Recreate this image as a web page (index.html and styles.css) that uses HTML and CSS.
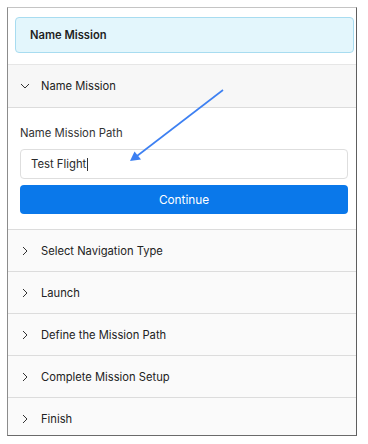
FILE: index.html
```html
<!DOCTYPE html>
<html>
<head>
<meta charset="utf-8">
<link rel="stylesheet" href="styles.css">
</head>
<body>
<div class="frame">
  <div class="top">
    <div class="title-box">Name Mission</div>
  </div>
  <div class="row open">
    <svg class="chev" width="10" height="10" viewBox="0 0 10 10"><path d="M1 3 L5 7 L9 3" fill="none" stroke="#333" stroke-width="1"/></svg>
    <span>Name Mission</span>
  </div>
  <div class="panel">
    <div class="label">Name Mission Path</div>
    <div class="input"><span>Test Flight</span><span class="caret"></span></div>
    <div class="btn">Continue</div>
  </div>
  <div class="row"><svg class="chev" width="10" height="10" viewBox="0 0 10 10"><path d="M3 1 L7 5 L3 9" fill="none" stroke="#333" stroke-width="1"/></svg><span>Select Navigation Type</span></div>
  <div class="row"><svg class="chev" width="10" height="10" viewBox="0 0 10 10"><path d="M3 1 L7 5 L3 9" fill="none" stroke="#333" stroke-width="1"/></svg><span>Launch</span></div>
  <div class="row"><svg class="chev" width="10" height="10" viewBox="0 0 10 10"><path d="M3 1 L7 5 L3 9" fill="none" stroke="#333" stroke-width="1"/></svg><span>Define the Mission Path</span></div>
  <div class="row"><svg class="chev" width="10" height="10" viewBox="0 0 10 10"><path d="M3 1 L7 5 L3 9" fill="none" stroke="#333" stroke-width="1"/></svg><span>Complete Mission Setup</span></div>
  <div class="row last"><svg class="chev" width="10" height="10" viewBox="0 0 10 10"><path d="M3 1 L7 5 L3 9" fill="none" stroke="#333" stroke-width="1"/></svg><span>Finish</span></div>
</div>
<svg class="arrow" width="368" height="444" viewBox="0 0 368 444">
  <line x1="223" y1="90" x2="137" y2="156" stroke="#3d80f2" stroke-width="1.6"/>
  <polygon points="130,161 134.5,151.5 141,159.5" fill="#3d80f2"/>
</svg>
</body>
</html>
```
FILE: styles.css
```css
html, body {
  margin: 0;
  padding: 0;
  background: #fff;
}
body {
  font-family: Inter, "Noto Sans", sans-serif;
  color: #222;
  position: relative;
  width: 368px;
  height: 444px;
}
.frame {
  margin: 7px 0 0 7px;
  width: 348px;
  height: 427px;
  border: 1px solid #8c8c8c;
  border-top-color: #c4c4c4;
  border-right-color: #5e5e5e;
  border-bottom-color: #6a6a6a;
  background: #fafafa;
  overflow: hidden;
}
.top {
  background: #fff;
  padding: 9px 2px 10px 7px;
  border-bottom: 1px solid #e6e6e6;
  height: 37px;
}
.title-box {
  height: 34px;
  border: 1px solid #a8dcf0;
  border-radius: 4px;
  background: #e3f6fc;
  display: flex;
  align-items: center;
  padding-left: 14px;
  font-size: 11.2px;
  font-weight: 600;
  color: #1e1e1e;
}
.row {
  height: 41px;
  display: flex;
  align-items: center;
  background: #fafafa;
  border-bottom: 1px solid #dcdcdc;
  font-size: 11.2px;
  color: #222;
}
.row.last {
  border-bottom: none;
}
.row.open {
  height: 42px;
  background: #f7f7f7;
}
.chev {
  margin-left: 12px;
  margin-right: 11px;
  flex: none;
}
.panel {
  background: #fff;
  padding: 18px 8px 15px 12px;
  border-bottom: 1px solid #dcdcdc;
}
.label {
  font-size: 11.3px;
  color: #333;
  line-height: 14px;
  margin-bottom: 9px;
}
.input {
  height: 28px;
  border: 1px solid #dedede;
  border-radius: 4px;
  display: flex;
  align-items: center;
  padding-left: 10px;
  font-size: 11.3px;
  color: #2a2a2a;
}
.caret {
  display: inline-block;
  width: 1px;
  height: 13px;
  background: #333;
  margin-left: 1px;
}
.btn {
  margin-top: 6px;
  height: 29px;
  border-radius: 4px;
  background: #0a78ea;
  color: #fff;
  display: flex;
  align-items: center;
  justify-content: center;
  font-size: 11.8px;
}
.arrow {
  position: absolute;
  left: 0;
  top: 0;
  pointer-events: none;
}
```
